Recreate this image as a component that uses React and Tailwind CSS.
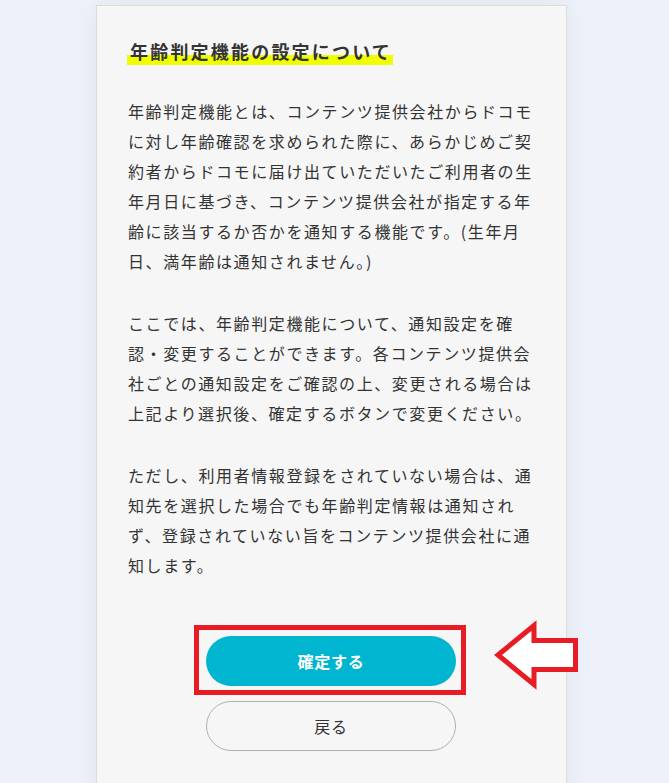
import React from 'react';

const paragraphs = [
  [
    '年齢判定機能とは、コンテンツ提供会社からドコモ',
    'に対し年齢確認を求められた際に、あらかじめご契',
    '約者からドコモに届け出ていただいたご利用者の生',
    '年月日に基づき、コンテンツ提供会社が指定する年',
    '齢に該当するか否かを通知する機能です。(生年月',
    '日、満年齢は通知されません。)',
  ],
  [
    'ここでは、年齢判定機能について、通知設定を確',
    '認・変更することができます。各コンテンツ提供会',
    '社ごとの通知設定をご確認の上、変更される場合は',
    '上記より選択後、確定するボタンで変更ください。',
  ],
  [
    'ただし、利用者情報登録をされていない場合は、通',
    '知先を選択した場合でも年齢判定情報は通知され',
    'ず、登録されていない旨をコンテンツ提供会社に通',
    '知します。',
  ],
];

const ArrowMark = () => (
  <svg width="95" height="75" viewBox="0 0 95 75" className="absolute left-[283px] top-[-18px]">
    <polygon
      points="9,37 45,7.5 45,22.5 86.5,22.5 86.5,51.5 45,51.5 45,66.5"
      fill="#ffffff"
      stroke="#e81c24"
      strokeWidth="5"
      strokeLinejoin="miter"
    />
  </svg>
);

const App = () => {
  return (
    <div className="min-h-screen bg-[#edf1f9] pt-[5px] overflow-hidden font-['Noto_Sans_CJK_JP','Noto_Sans',sans-serif] text-[#333]">
      <div className="ml-[96px] w-[471px] bg-[#f6f6f6] border border-[#dcdcdc] shadow-[0_0_24px_rgba(30,40,90,0.06)] pl-[31px] pr-[32px] pt-[31px] pb-[60px]">
        <h2 className="mb-[31px]">
          <span className="inline-block -ml-[1px] pl-[3px] pr-[1px] text-[18px] leading-[28px] font-bold tracking-[2.2px] bg-[linear-gradient(transparent_18px,#efff00_18px)]">
            年齢判定機能の設定について
          </span>
        </h2>

        {paragraphs.map((lines, i) => (
          <p key={i} className="mb-[32px] text-[16px] leading-[30px] tracking-[0.1em] whitespace-nowrap">
            {lines.map((line, j) => (
              <React.Fragment key={j}>
                {line}
                {j < lines.length - 1 && <br />}
              </React.Fragment>
            ))}
          </p>
        ))}

        <div className="flex flex-col items-center pt-[24px]">
          <div className="relative">
            <div className="absolute top-[-11px] left-[-12px] right-[-10px] bottom-[-9px] border-[5px] border-[#e81c24]" />
            <button className="relative w-[250px] h-[50px] rounded-full bg-[#00b5d0] text-white text-[16px] font-bold tracking-[0.05em]">
              確定する
            </button>
            <ArrowMark />
          </div>
          <button className="mt-[15px] w-[250px] h-[50px] rounded-full border border-[#b0b0b0] text-[16px] tracking-[0.05em] text-[#333]">
            戻る
          </button>
        </div>
      </div>
    </div>
  );
};

export default App;
